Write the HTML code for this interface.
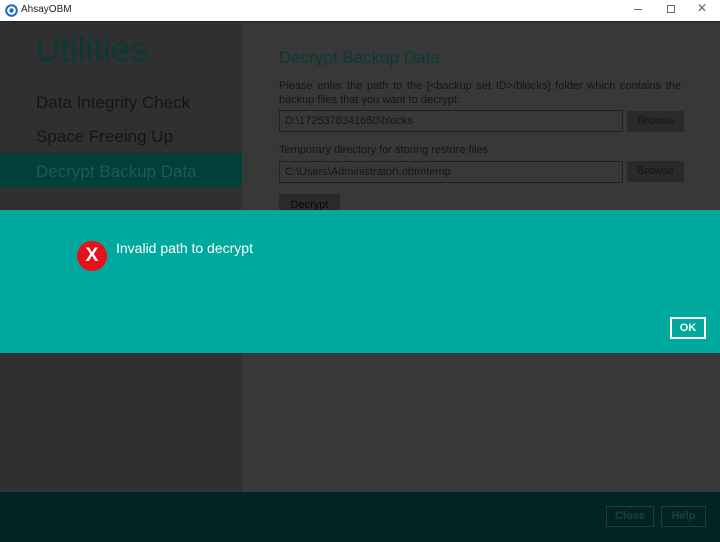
<!DOCTYPE html>
<html><head><style>
*{margin:0;padding:0;box-sizing:border-box}
body{width:720px;height:542px;overflow:hidden;font-family:"Liberation Sans","DejaVu Sans",sans-serif;background:#383838;position:relative}
.a{position:absolute}
</style></head><body>
<div class="a" style="left:0;top:0;width:720px;height:21px;background:#fff"></div>
<div class="a" style="left:0;top:21px;width:720px;height:1px;background:#222"></div>
<svg class="a" style="left:5px;top:4px" width="13" height="13"><circle cx="6.5" cy="6.5" r="5.3" fill="none" stroke="#1a6fc0" stroke-width="2"/><circle cx="6.5" cy="6.5" r="2.2" fill="#1a6fc0"/></svg>
<div class="a" style="left:21px;top:4px;font-size:10px;color:#222">AhsayOBM</div>
<div class="a" style="left:634px;top:9px;width:8px;height:1px;background:#666"></div>
<div class="a" style="left:667px;top:5px;width:8px;height:8px;border:1px solid #666"></div>
<div class="a" style="left:697px;top:1px;font-size:12px;color:#666">✕</div>

<div class="a" style="left:0;top:22px;width:242px;height:470px;background:#303030"></div>
<div class="a" style="left:35px;top:30px;font-size:35px;color:#0a3a36;font-weight:300">Utilities</div>
<div class="a" style="left:36px;top:93px;font-size:17px;color:#151515">Data Integrity Check</div>
<div class="a" style="left:36px;top:127px;font-size:17px;color:#151515">Space Freeing Up</div>
<div class="a" style="left:0;top:153px;width:242px;height:34px;background:#003f3a"></div>
<div class="a" style="left:36px;top:162px;font-size:17px;color:#1f5a55">Decrypt Backup Data</div>

<div class="a" style="left:279px;top:48px;font-size:17px;color:#0a3a36">Decrypt Backup Data</div>
<div class="a" style="left:279px;top:79px;width:402px;font-size:11px;line-height:14px;color:#151515;text-align:justify">Please enter the path to the [&lt;backup set ID&gt;/blocks] folder which contains the backup files that you want to decrypt.</div>
<div class="a" style="left:279px;top:110px;width:344px;height:22px;border:1px solid #222;font-size:11px;color:#151515;padding:4px 5px">D:\1725378341650\blocks</div>
<div class="a" style="left:627px;top:111px;width:57px;height:21px;background:#2a2a2a;font-size:11px;color:#151515;text-align:center;line-height:21px">Browse</div>
<div class="a" style="left:279px;top:144px;font-size:11px;color:#151515">Temporary directory for storing restore files</div>
<div class="a" style="left:279px;top:161px;width:344px;height:22px;border:1px solid #222;font-size:11px;color:#151515;padding:4px 5px">C:\Users\Administrator\.obm\temp</div>
<div class="a" style="left:627px;top:161px;width:57px;height:21px;background:#2a2a2a;font-size:11px;color:#151515;text-align:center;line-height:21px">Browse</div>
<div class="a" style="left:279px;top:194px;width:61px;height:16px;background:#2a2a2a;font-size:11px;color:#0a0a0a;text-align:center;line-height:22px;overflow:hidden">Decrypt</div>

<div class="a" style="left:0;top:210px;width:720px;height:143px;background:#00a99d"></div>
<div class="a" style="left:77px;top:241px;width:30px;height:30px;border-radius:50%;background:#e8101a;color:#fff;font-weight:bold;font-size:19px;text-align:center;line-height:30px">X</div>
<div class="a" style="left:116px;top:240px;font-size:14px;color:#fff">Invalid path to decrypt</div>
<div class="a" style="left:670px;top:317px;width:36px;height:22px;border:2px solid #fff;color:#fff;font-size:11px;font-weight:bold;text-align:center;line-height:18px">OK</div>

<div class="a" style="left:0;top:492px;width:720px;height:50px;background:#002522"></div>
<div class="a" style="left:606px;top:506px;width:48px;height:21px;border:1px solid #1d403c;color:#1d403c;font-size:11px;font-weight:bold;text-align:center;line-height:19px">Close</div>
<div class="a" style="left:661px;top:506px;width:45px;height:21px;border:1px solid #1d403c;color:#1d403c;font-size:11px;font-weight:bold;text-align:center;line-height:19px">Help</div>
</body></html>
